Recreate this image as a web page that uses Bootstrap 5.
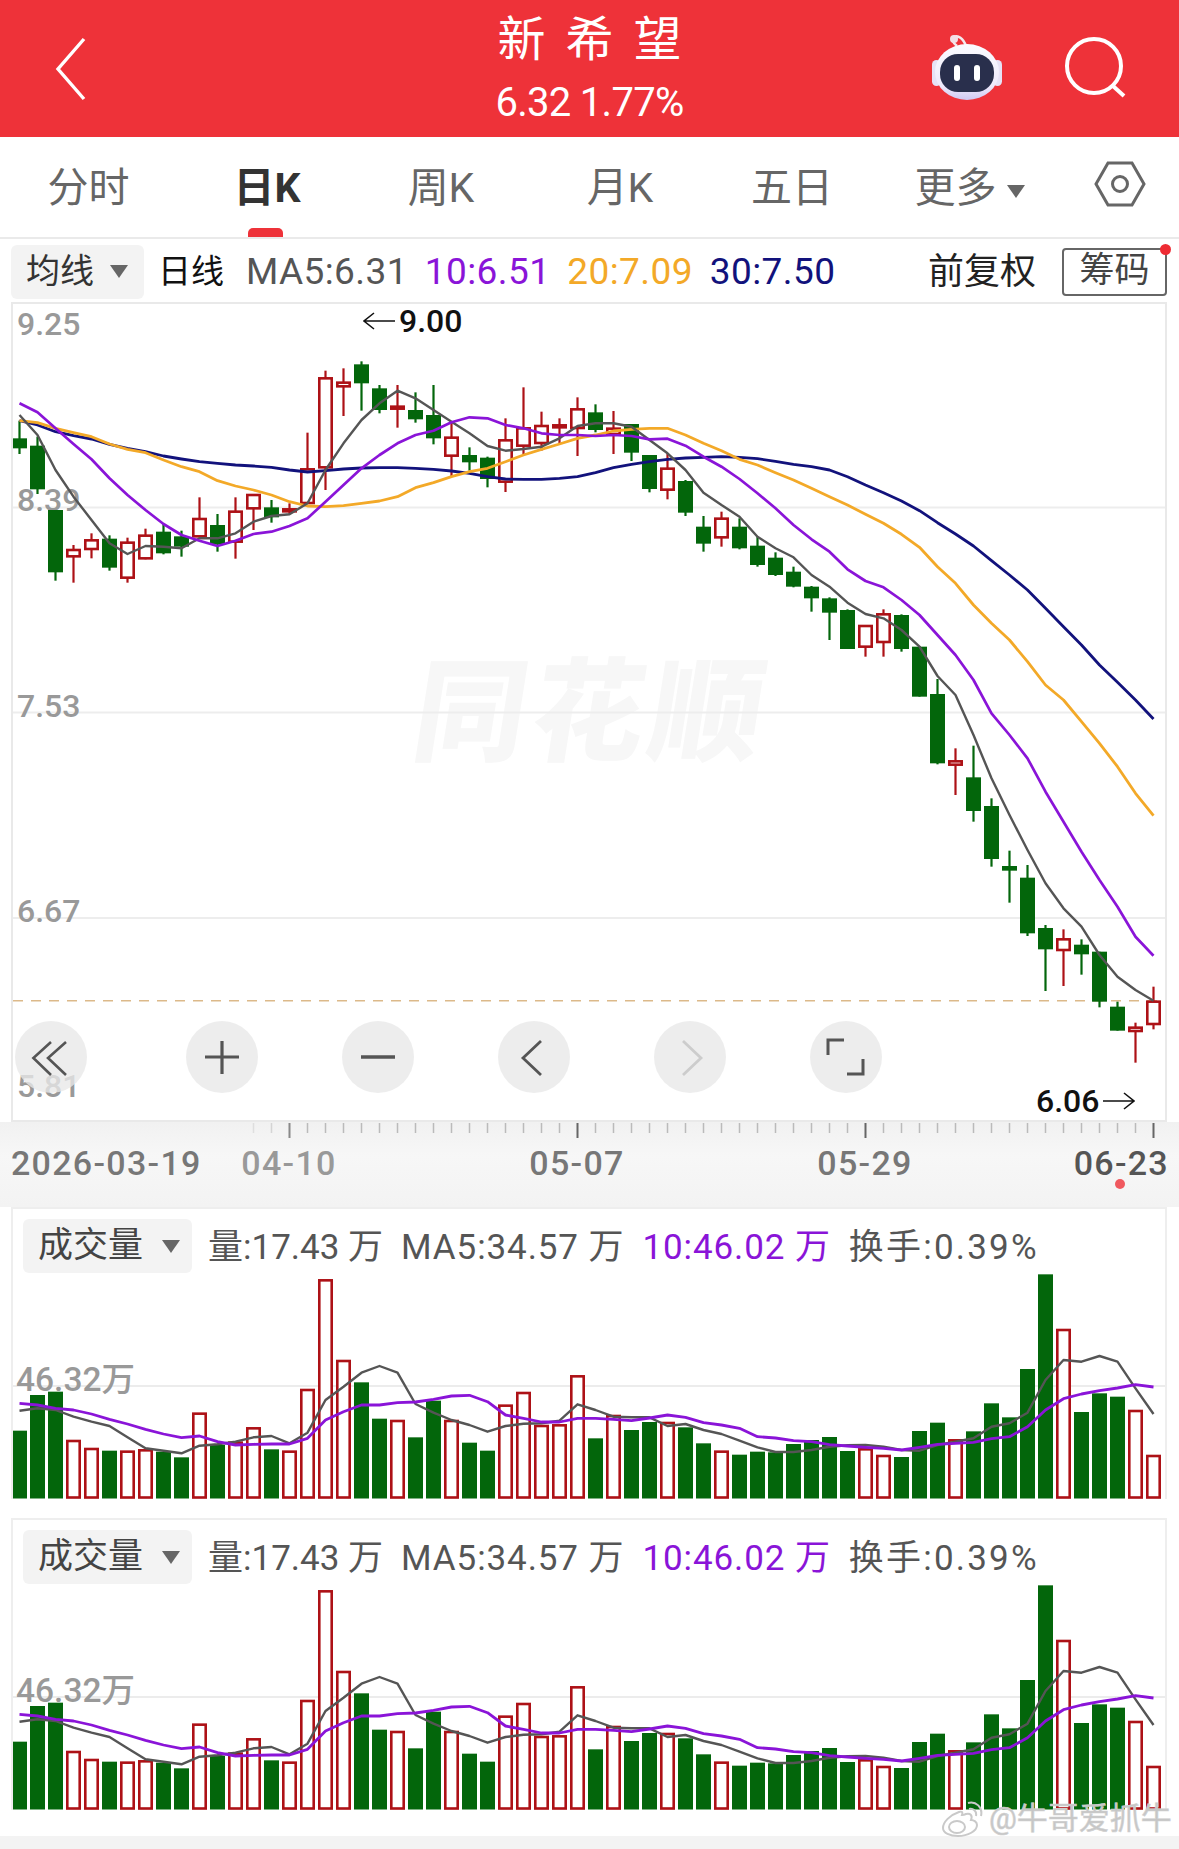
<!doctype html>
<html lang="zh-CN">
<head>
<meta charset="utf-8">
<title>新希望 日K</title>
<link rel="stylesheet" href="https://cdn.jsdelivr.net/npm/bootstrap@5.3.0/dist/css/bootstrap.min.css">
<script src="https://cdn.jsdelivr.net/npm/bootstrap@5.3.0/dist/js/bootstrap.bundle.min.js"></script>
<style>
html,body{margin:0;background:#fff}
body{width:1179px;height:1849px;overflow:hidden;font-family:Roboto,"Noto Sans CJK SC",sans-serif;color:#555}
.quote-head{height:137px;background:#ee3239;color:#fff}
.head-side{width:300px}
.head-title{font-size:48px;line-height:54px;letter-spacing:20px;margin-right:-20px;font-weight:400;padding-top:13px}
.head-price{font-size:40px;line-height:46px;letter-spacing:-.7px;margin-top:13px}
.period-bar{height:102px;border-bottom:2px solid #eaeaea;font-size:41px;color:#666}
.period-tab{height:100px;padding-top:29px;line-height:44px;text-align:center}
.period-on{color:#333;font-weight:700}
.period-mark{position:absolute;left:71px;bottom:0;width:35px;height:9px;border-radius:5px 5px 0 0;background:#ee3239}
.w177{width:177px}.w180{width:180px}.w168{width:168px}.w190{width:190px}.w154{width:154px}.w191{width:191px;padding-left:10px}.w119{width:119px}
.tri{display:inline-block;width:0;height:0;border-left:9px solid transparent;border-right:9px solid transparent;border-top:13px solid #666;vertical-align:middle}
.ma-row{height:63px;padding:2px 12px 0 11px;font-size:37px;letter-spacing:.4px;gap:17px;color:#555}
.pick-pill{background:#f3f3f3;border-radius:6px;color:#333;font-size:34px;height:54px;letter-spacing:0}
.pick-ma{width:133px;padding-left:15px;gap:16px;margin-right:-3px}
.day-label{font-size:33px;color:#111;letter-spacing:0;margin-right:5px}
.c-purple{color:#8a14d8}.c-orange{color:#f3a928}.c-navy{color:#12127c}
.adj-label{font-size:36px;color:#222;letter-spacing:0;margin-right:7px}
.chip-btn{width:105px;height:48px;border:2px solid #666;border-radius:4px;font-size:35px;line-height:42px;color:#444;text-align:center;letter-spacing:0;margin-left:2px}
.chip-dot{position:absolute;top:-6px;right:-6px;width:11px;height:11px;border-radius:50%;background:#ee2b33}
.price-frame{margin-left:11px;width:1156px;height:820px;border:2px solid #e9e9e9;background:#fff}
.price-frame svg,.vol-frame svg,.axis-band svg{display:block}
.tool-row{position:absolute;left:2px;top:717px;gap:84px}
.tool-first{margin-right:15px}
.tool-btn{width:72px;height:72px;padding:0;border:0;border-radius:50%;background:rgba(232,232,232,.78)}
.price-tag{position:absolute;gap:3px;font-size:32px;line-height:36px;font-weight:500;color:#111;white-space:nowrap}
.tag-high{left:350px;top:-1px}
.tag-low{left:1023px;top:779px}
.axis-band{height:85px;background:linear-gradient(180deg,#f1f1f1,#f7f7f7 40%,#f3f3f3)}
.vol-frame{margin:0 0 19px 11px;width:1156px;height:292px;border:2px solid #eee;border-bottom:0;background:#fff}
.vol-head{height:64px;padding:10px 0 0 10px;gap:18px;font-size:35px;letter-spacing:.9px;color:#555;white-space:nowrap}
.vol-head>span{padding-top:4px}
.vol-tight{letter-spacing:0}
.vol-wide{letter-spacing:2.2px}
.pick-vol{width:169px;padding-left:15px;gap:19px;font-size:35px;letter-spacing:0;color:#444;margin-right:-2px}
.foot-strip{position:absolute;left:0;top:1836px;width:1179px;height:13px;background:#f3f3f3}
.wb-mark{position:absolute;left:941px;top:1801px;gap:4px;font-size:31px;line-height:36px;color:#c6c6c6;-webkit-text-stroke:.6px #d2d2d2;white-space:nowrap}
svg text{font-family:Roboto,"Noto Sans CJK SC",sans-serif}
</style>
</head>
<body class="position-relative">

<header class="quote-head d-flex justify-content-between">
  <div class="head-side d-flex align-items-center ps-5">
    <svg width="40" height="68" viewBox="0 0 40 68" fill="none" stroke="#fff" stroke-width="3.4" style="margin-left:3px"><path d="M33 4 7 34l26 30"/></svg>
  </div>
  <div class="text-center">
    <div class="head-title">新希望</div>
    <div class="head-price">6.32 1.77%</div>
  </div>
  <div class="head-side d-flex align-items-center justify-content-end">
    <svg width="80" height="76" viewBox="0 0 80 76">
      <defs>
        <linearGradient id="shell" x1="0" y1="0" x2="0" y2="1"><stop offset="0" stop-color="#fbfbff"/><stop offset=".75" stop-color="#eeeafb"/><stop offset="1" stop-color="#cfc8f2"/></linearGradient>
      </defs>
      <path d="M30 15c-4-3-6-7-3-9 4-2 9 1 12 9" fill="none" stroke="#f3e9ee" stroke-width="2.6"/>
      <circle cx="27" cy="8" r="4" fill="#f3dfe6"/>
      <rect x="5" y="29" width="9" height="26" rx="4.5" fill="#e6e2f6"/>
      <rect x="66" y="29" width="9" height="26" rx="4.5" fill="#e6e2f6"/>
      <ellipse cx="40" cy="41" rx="32" ry="28" fill="url(#shell)"/>
      <rect x="13" y="23" width="54" height="38" rx="18" fill="#292f4c"/>
      <rect x="27" y="34" width="6" height="16" rx="3" fill="#fff"/>
      <rect x="47" y="34" width="6" height="16" rx="3" fill="#fff"/>
    </svg>
    <svg width="66" height="66" viewBox="0 0 66 66" fill="none" stroke="#fff" stroke-width="4" style="margin:0 49px 0 57px"><circle cx="30" cy="30" r="27"/><path d="m49 50 11 10"/></svg>
  </div>
</header>

<nav class="period-bar d-flex">
  <div class="period-tab w177">分时</div>
  <div class="period-tab w180 period-on position-relative">日K<span class="period-mark"></span></div>
  <div class="period-tab w168">周K</div>
  <div class="period-tab w190">月K</div>
  <div class="period-tab w154">五日</div>
  <div class="period-tab w191">更多 <span class="tri"></span></div>
  <div class="period-tab w119 d-flex align-items-start justify-content-center" style="padding-top:24px">
    <svg width="52" height="46" viewBox="0 0 52 46" fill="none" stroke="#666" stroke-width="3"><path d="M14 2h24l12 21-12 21H14L2 23z"/><circle cx="26" cy="23" r="7.5"/></svg>
  </div>
</nav>

<div class="ma-row d-flex align-items-center">
  <div class="pick-pill pick-ma d-flex align-items-center"><span>均线</span><span class="tri"></span></div>
  <span class="day-label">日线</span>
  <span>MA5:6.31</span>
  <span class="c-purple">10:6.51</span>
  <span class="c-orange">20:7.09</span>
  <span class="c-navy">30:7.50</span>
  <span class="adj-label ms-auto">前复权</span>
  <div class="chip-btn position-relative">筹码<span class="chip-dot"></span></div>
</div>

<section class="price-frame position-relative">
  <svg id="priceSvg" width="1152" height="816" viewBox="13 304 1152 816"></svg>
  <div class="price-tag tag-high d-flex align-items-center">
    <svg width="33" height="18" viewBox="0 0 33 18" fill="none" stroke="#111" stroke-width="1.6"><path d="M32 9H2m9-8L1 9l10 8"/></svg><span>9.00</span>
  </div>
  <div class="price-tag tag-low d-flex align-items-center">
    <span>6.06</span><svg width="33" height="18" viewBox="0 0 33 18" fill="none" stroke="#111" stroke-width="1.6"><path d="M1 9h30m-9-8 10 8-10 8"/></svg>
  </div>
  <div class="tool-row d-flex">
    <button class="tool-btn tool-first" type="button" aria-label="left fast"><svg width="72" height="72" viewBox="-36 -36 72 72" fill="none" stroke="#555" stroke-width="2.6"><path d="M0-15-17.6 1 0 18M15-15-3 1 15 18"/></svg></button>
    <button class="tool-btn" type="button" aria-label="zoom in"><svg width="72" height="72" viewBox="-36 -36 72 72" fill="none" stroke="#555" stroke-width="3.2"><path d="M-17 0h34M0-16v33"/></svg></button>
    <button class="tool-btn" type="button" aria-label="zoom out"><svg width="72" height="72" viewBox="-36 -36 72 72" fill="none" stroke="#555" stroke-width="3.6"><path d="M-17 0h34"/></svg></button>
    <button class="tool-btn" type="button" aria-label="previous"><svg width="72" height="72" viewBox="-36 -36 72 72" fill="none" stroke="#555" stroke-width="2.8"><path d="M7-16-11 1 7 18"/></svg></button>
    <button class="tool-btn" type="button" aria-label="next"><svg width="72" height="72" viewBox="-36 -36 72 72" fill="none" stroke="#ccc" stroke-width="2.8"><path d="M-7-16 11 1-7 18"/></svg></button>
    <button class="tool-btn" type="button" aria-label="full screen"><svg width="72" height="72" viewBox="-36 -36 72 72" fill="none" stroke="#555" stroke-width="3"><path d="M-2-17h-16V-2M1 17h16V2"/></svg></button>
  </div>
</section>

<div class="axis-band">
  <svg id="axisSvg" width="1179" height="85" viewBox="0 1122 1179 85"></svg>
</div>

<section class="vol-frame">
  <div class="vol-head d-flex align-items-center">
    <div class="pick-pill pick-vol d-flex align-items-center"><span>成交量</span><span class="tri"></span></div>
    <span class="vol-tight">量:17.43 万</span><span>MA5:34.57 万</span><span class="c-purple">10:46.02 万</span><span class="vol-wide">换手:0.39%</span>
  </div>
  <svg class="vol-svg" width="1152" height="226" viewBox="13 1273 1152 226"></svg>
</section>

<section class="vol-frame">
  <div class="vol-head d-flex align-items-center">
    <div class="pick-pill pick-vol d-flex align-items-center"><span>成交量</span><span class="tri"></span></div>
    <span class="vol-tight">量:17.43 万</span><span>MA5:34.57 万</span><span class="c-purple">10:46.02 万</span><span class="vol-wide">换手:0.39%</span>
  </div>
  <svg class="vol-svg" width="1152" height="226" viewBox="13 1273 1152 226"></svg>
</section>

<div class="foot-strip"></div>
<div class="wb-mark d-flex align-items-center">
  <svg width="44" height="36" viewBox="0 0 44 36" fill="none" stroke="#c9c9c9" stroke-width="2"><path d="M18 11C9 14 2 21 2 27c0 5 7 8 15 8 10 0 19-5 19-11 0-3-3-5-6-5 2-5-1-7-5-6-2 1-4 1-4 1 1-3 0-4-3-3z"/><ellipse cx="16" cy="26" rx="8" ry="6"/><path d="M28 8c4-1 8 2 7 7M27 2c8-2 15 4 13 13"/></svg>
  <span>@牛哥爱抓牛</span>
</div>

<script>
const GREEN='#03660b',RED='#ad1116',GRAY='#555',PURPLE='#8a14d8',ORANGE='#f3a928',NAVY='#12127c';
const cx=i=>19.5+18*i, py=z=>300+z/3, vy=z=>1210+z/3;
// type, wick top, body top, body bottom, wick bottom (3x crop units from y=300)
const K=[['g',362,415,445,462],['g',410,437,568,582],['g',630,630,817,842],['r',735,747,772,848],['r',700,718,750,775],['g',706,716,803,812],['r',713,725,836,848],['r',686,704,778,778],['g',672,695,760,763],['g',692,709,740,770],['r',592,654,712,712],['g',642,675,733,755],['r',592,632,728,776],['r',582,582,628,690],['g',600,622,652,668],['r',610,625,630,642],['r',398,505,612,612],['r',212,232,505,570],['r',205,245,262,348],['g',184,193,250,332],['g',255,265,330,340],['r',255,317,321,383],['g',277,330,358,368],['g',255,345,415,433],['r',365,410,470,528],['g',442,465,487,512],['g',470,473,537,562],['r',355,418,548,576],['r',262,382,440,462],['r',335,375,432,452],['r',355,373,379,432],['r',292,325,387,468],['g',313,337,390,397],['r',333,383,405,462],['g',372,372,458,483],['g',465,465,567,577],['r',460,503,572,598],['g',540,543,638,648],['g',648,680,731,755],['r',635,653,715,740],['g',655,680,745,748],['g',710,737,795,800],['g',757,773,825,828],['g',800,815,860,862],['g',858,860,895,935],['g',892,895,938,1020],['g',928,930,1047,1047],['r',975,975,1043,1070],['r',928,940,1029,1070],['g',943,945,1047,1055],['g',1038,1040,1190,1190],['g',1137,1182,1390,1393],['r',1345,1381,1397,1485],['g',1337,1432,1533,1565],['g',1495,1518,1677,1700],['g',1652,1698,1712,1808],['g',1695,1733,1900,1908],['g',1875,1884,1948,2073],['r',1888,1915,1953,2058],['g',1918,1934,1963,2024],['g',1955,1955,2105,2122],['g',2105,2120,2192,2192],['r',2168,2180,2196,2288],['r',2060,2102,2175,2188]];
const MA5=[345,405,510,590,660,730,762,738,740,745,715,715,700,665,648,643,610,510,430,360,310,272,295,330,365,400,438,452,447,440,415,378,370,370,380,420,460,510,578,615,650,710,745,772,825,860,908,942,955,990,1040,1128,1185,1305,1435,1545,1650,1750,1825,1880,1965,2030,2070,2102];
const MA10=[310,337,385,432,478,535,585,630,672,705,722,738,722,702,695,678,655,605,555,505,465,430,405,392,367,352,355,375,385,400,405,405,408,405,408,418,416,437,470,500,537,580,625,675,718,755,808,843,862,900,945,1005,1065,1140,1240,1305,1375,1475,1565,1655,1740,1820,1910,1967];
const MA20=[362,368,385,398,410,432,448,458,480,500,515,542,558,570,585,605,618,620,617,610,603,590,563,548,530,515,505,485,465,448,432,415,405,393,388,385,385,405,430,452,478,495,518,540,565,590,615,643,670,703,742,800,850,915,970,1020,1085,1155,1200,1265,1330,1400,1480,1547];
const MA30=[362,375,395,407,417,433,445,455,468,477,485,490,495,498,502,510,516,512,507,504,503,503,505,508,513,520,530,537,538,538,535,530,518,503,493,485,478,474,472,470,472,476,484,493,500,510,530,555,578,603,632,668,702,738,782,825,870,925,980,1035,1095,1147,1200,1257];
const VOL=[662,555,545,690,714,722,722,718,725,742,608,705,695,652,718,722,537,208,450,517,626,630,682,572,630,698,722,584,546,645,643,496,685,615,660,636,636,652,700,722,734,725,727,702,690,681,723,715,735,741,663,638,688,664,580,622,477,193,357,606,550,560,600,735];
const V5=[602,595,600,620,635,648,682,715,722,730,707,703,695,682,678,700,668,570,530,488,468,488,582,608,630,645,665,648,641,640,632,583,600,620,622,622,648,642,660,672,692,712,726,726,720,710,706,705,710,720,722,705,695,685,650,640,608,510,450,455,438,455,535,612];
const V10=[580,585,595,600,612,628,642,658,672,683,678,695,705,703,702,702,685,630,605,585,585,578,576,568,558,556,575,615,625,636,636,625,625,628,632,624,615,622,638,645,655,680,684,692,695,704,708,712,715,720,712,703,700,697,686,680,650,600,566,552,542,534,524,531];
const poly=(a,f,c,w)=>`<polyline points="${a.map((z,i)=>cx(i)+','+f(z).toFixed(1)).join(' ')}" fill="none" stroke="${c}" stroke-width="${w}" stroke-linejoin="round"/>`;
const label=(t,x,y,c,s,a)=>`<text x="${x}" y="${y}" fill="${c}" font-size="${s}"${a?` font-weight="${a}"`:''}>${t}</text>`;

let p=`<text transform="translate(586 752) skewX(-9)" text-anchor="middle" font-size="112" font-weight="900" letter-spacing="6" fill="#f7f7f7">同花顺</text>`;
[506.5,711.5,917].forEach(y=>p+=`<rect x="13" y="${y}" width="1152" height="2" fill="#ededed"/>`);
[['9.25',335],['8.39',511],['7.53',717],['6.67',922],['5.81',1097]].forEach(l=>p+=label(l[0],17,l[1],'#999',32,500));
p+=`<line x1="13" x2="1165" y1="1000.7" y2="1000.7" stroke="#dcb98a" stroke-width="1.6" stroke-dasharray="10 8"/>`;
K.forEach((k,i)=>{
  const x=cx(i),col=k[0]==='g'?GREEN:RED,t=py(k[1]),b1=py(k[2]),b2=py(k[3]),w=py(k[4]);
  p+=`<line x1="${x}" x2="${x}" y1="${t}" y2="${w}" stroke="${col}" stroke-width="2.2"/>`;
  p+=k[0]==='g'?`<rect x="${x-7.5}" y="${b1}" width="15" height="${b2-b1}" fill="${col}"/>`
     :`<rect x="${x-6.2}" y="${b1+1}" width="12.4" height="${Math.max(b2-b1-2,2)}" fill="#fff" stroke="${col}" stroke-width="2.6"/>`;
});
p+=poly(MA30,py,NAVY,2.8)+poly(MA20,py,ORANGE,2.8)+poly(MA5,py,GRAY,2.4)+poly(MA10,py,PURPLE,2.7);
document.getElementById('priceSvg').innerHTML=p;

let a='';
K.forEach((k,i)=>{
  if(i<13)return;
  const major=(i-15)%16===0, fade=i<16?.35+(i-13)*.2:1;
  a+=`<rect x="${cx(i)-(major?1:.75)}" y="1123" width="${major?2:1.5}" height="${major?15:10}" fill="${major?'#666':'#bbb'}" opacity="${fade}"/>`;
});
[['2026-03-19',11,'#777','start'],['04-10',289,'#999','middle'],['05-07',577,'#777','middle'],['05-29',865,'#777','middle'],['06-23',1169,'#555','end']].forEach(d=>{
  a+=`<text x="${d[1]}" y="1175" fill="${d[2]}" font-size="34" font-weight="500" letter-spacing="1.3" text-anchor="${d[3]}">${d[0]}</text>`;
});
a+=`<circle cx="1120" cy="1184" r="5" fill="#f0595f"/>`;
document.getElementById('axisSvg').innerHTML=a;

let v=`<rect x="13" y="1385" width="1152" height="2" fill="#ececec"/>`+label('46.32万',16,1391,'#999',33.5,500);
const BASE=1498.5;
VOL.forEach((z,i)=>{
  const x=cx(i),y=vy(z),col=K[i][0]==='g'?GREEN:RED;
  v+=K[i][0]==='g'?`<rect x="${x-7.5}" y="${y}" width="15" height="${BASE-y}" fill="${col}"/>`
    :`<rect x="${x-6.2}" y="${y+1}" width="12.4" height="${BASE-y-2}" fill="#fff" stroke="${col}" stroke-width="2.6"/>`;
});
v+=poly(V5,vy,GRAY,2.4)+poly(V10,vy,PURPLE,2.8);
document.querySelectorAll('.vol-svg').forEach(s=>s.innerHTML=v);
</script>
</body>
</html>
